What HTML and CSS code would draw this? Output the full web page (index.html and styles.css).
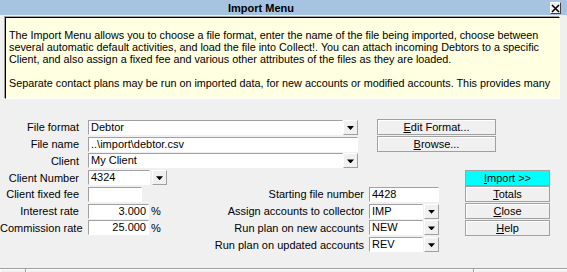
FILE: index.html
```html
<!DOCTYPE html>
<html lang="en">
<head>
  <meta charset="UTF-8">
  <title>Import Menu</title>
  <link rel="stylesheet" href="styles.css">
</head>
<body>
  <div class="window">

    <div class="titlebar">
      <span class="title">Import Menu</span>
      <span class="close">
        <svg width="9" height="9" viewBox="0 0 9 9"><path d="M1 1 L8 8 M8 1 L1 8" stroke="#000" stroke-width="1.6"/></svg>
      </span>
    </div>

    <div class="info">
      <p>The Import Menu allows you to choose a file format, enter the name of the file being imported, choose between<br>several automatic default activities, and load the file into Collect!. You can attach incoming Debtors to a specific<br>Client, and also assign a fixed fee and various other attributes of the files as they are loaded.</p>
      <p>Separate contact plans may be run on imported data, for new accounts or modified accounts. This provides many</p>
    </div>

    <div class="form">
      <!-- row 1 -->
      <label class="lbl r1">File format</label>
      <div class="combo wide r1"><span class="field">Debtor</span><span class="drop"></span></div>
      <button class="btn btn-top r1"><u>E</u>dit Format...</button>

      <!-- row 2 -->
      <label class="lbl r2">File name</label>
      <div class="combo wide r2"><span class="field">..\import\debtor.csv</span></div>
      <button class="btn btn-top r2"><u>B</u>rowse...</button>

      <!-- row 3 -->
      <label class="lbl r3">Client</label>
      <div class="combo wide r3"><span class="field">My Client</span><span class="drop"></span></div>

      <!-- row 4 -->
      <label class="lbl r4">Client Number</label>
      <div class="combo small r4"><span class="field">4324</span><span class="drop gap"></span></div>
      <button class="btn btn-side btn-import r4"><u>I</u>mport &gt;&gt;</button>

      <!-- row 5 -->
      <label class="lbl r5">Client fixed fee</label>
      <div class="combo fee r5"><span class="field"></span></div>
      <label class="lbl lbl-right r5">Starting file number</label>
      <div class="combo right r5"><span class="field">4428</span></div>
      <button class="btn btn-side r5"><u>T</u>otals</button>

      <!-- row 6 -->
      <label class="lbl r6">Interest rate</label>
      <div class="combo rate r6"><span class="field num">3.000</span><span class="pct">%</span></div>
      <label class="lbl lbl-right r6">Assign accounts to collector</label>
      <div class="combo right r6"><span class="field">IMP</span><span class="drop gap1"></span></div>
      <button class="btn btn-side r6"><u>C</u>lose</button>

      <!-- row 7 -->
      <label class="lbl r7">Commission rate</label>
      <div class="combo rate r7"><span class="field num">25.000</span><span class="pct">%</span></div>
      <label class="lbl lbl-right r7">Run plan on new accounts</label>
      <div class="combo right r7"><span class="field">NEW</span><span class="drop gap1"></span></div>
      <button class="btn btn-side r7"><u>H</u>elp</button>

      <!-- row 8 -->
      <label class="lbl lbl-right r8">Run plan on updated accounts</label>
      <div class="combo right r8"><span class="field">REV</span><span class="drop gap1"></span></div>
    </div>

    <div class="statusbar">
      <span class="pane pane-1"></span>
      <span class="pane pane-2"></span>
      <span class="pane pane-3"></span>
    </div>

  </div>
</body>
</html>
```

FILE: styles.css
```css
body {
  margin: 0;
  font-family: 'Liberation Sans', Arial, sans-serif;
  font-size: 11px;
  color: #000;
  background: #f0f0f0;
}

.window {
  width: 567px;
  height: 272px;
  background: #f0f0f0;
  display: flex;
  flex-direction: column;
  overflow: hidden;
}

.window > * {
  flex-shrink: 0;
}

/* Title bar */
.titlebar {
  height: 15px;
  background: #a6c3e1;
  display: flex;
  align-items: center;
}

.title {
  flex: 1;
  text-align: center;
  font-weight: bold;
  font-size: 11px;
  padding-right: 28px;
}

.close {
  width: 9px;
  height: 10px;
  margin-right: 6px;
  margin-top: 1px;
  background: #f0f0f0;
  border: 1px solid;
  border-color: #fff #404040 #404040 #fff;
  display: flex;
  align-items: center;
  justify-content: center;
}

/* Help text box */
.info {
  height: 80px;
  margin: 2px 7px 0 5px;
  background: #ffffe1;
  border: 1px solid;
  border-color: #000 #fff #fff #000;
  box-shadow: -1px -1px 0 #a0a0a0;
  padding: 0 0 0 3px;
  overflow: hidden;
  font-size: 10.8px;
  line-height: 12px;
}

.info p {
  margin: 11px 0 0 0;
  white-space: nowrap;
}

.info p + p {
  margin-top: 12px;
}

/* Form grid */
.form {
  margin-top: 20px;
  display: grid;
  grid-template-columns: 79px 129px 157px 100px 85px;
  grid-template-rows: repeat(8, 16.75px);
  align-items: center;
}

.r1 { grid-row: 1; }
.r2 { grid-row: 2; }
.r3 { grid-row: 3; }
.r4 { grid-row: 4; }
.r5 { grid-row: 5; }
.r6 { grid-row: 6; }
.r7 { grid-row: 7; }
.r8 { grid-row: 8; }

.lbl {
  grid-column: 1;
  text-align: right;
  white-space: nowrap;
}

.lbl-right {
  grid-column: 3;
  padding-right: 1px;
}

.combo {
  display: flex;
  align-items: center;
  height: 15px;
  margin-left: 9px;
}

.combo.wide {
  grid-column: 2 / span 3;
  width: 270px;
}

.combo.small { grid-column: 2; width: 79px; }
.combo.fee   { grid-column: 2; width: 54px; }
.combo.rate  { grid-column: 2; width: 72px; }

.combo.right {
  grid-column: 4;
  margin-left: 4px;
  width: 70px;
}

.field {
  flex: 1;
  height: 13px;
  line-height: 13px;
  background: #fff;
  border: 1px solid;
  border-color: #a0a0a0 #fff #fff #a0a0a0;
  padding: 0 2px;
  white-space: nowrap;
  overflow: hidden;
}

.field.num {
  text-align: right;
}

.pct {
  width: 9px;
  padding-left: 2px;
}

.drop {
  width: 13px;
  height: 13px;
  border: 1px solid;
  border-color: #fff #a0a0a0 #a0a0a0 #fff;
  background: #f0f0f0;
  position: relative;
}

.drop::after {
  content: "";
  position: absolute;
  left: 3px;
  top: 5px;
  width: 7px;
  height: 4px;
  background: #000;
  clip-path: polygon(0 0, 100% 0, 50% 100%);
}

.drop.gap  { margin-left: 2px; }
.drop.gap1 { margin-left: 1px; }

/* Buttons */
.btn {
  font-family: inherit;
  font-size: 11px;
  height: 16px;
  padding: 0;
  line-height: 14px;
  background: #f0f0f0;
  border: 1px solid #a0a0a0;
  box-shadow: inset 1px 1px 0 #fff;
  color: #000;
}

.btn-top {
  grid-column: 4 / span 2;
  margin-left: 12px;
  width: 119px;
}

.btn-side {
  grid-column: 5;
  width: 85px;
}

.btn-import {
  background: #00ffff;
  box-shadow: none;
}

/* Status bar */
.statusbar {
  margin-top: auto;
  height: 3px;
  display: flex;
  border-top: 1px solid #a0a0a0;
}

.pane {
  border-left: 1px solid #a0a0a0;
  box-shadow: inset 1px 1px 0 #fff;
}

.pane-1 { width: 25px; border-left: none; }
.pane-2 { width: 447px; }
.pane-3 { flex: 1; }
```
